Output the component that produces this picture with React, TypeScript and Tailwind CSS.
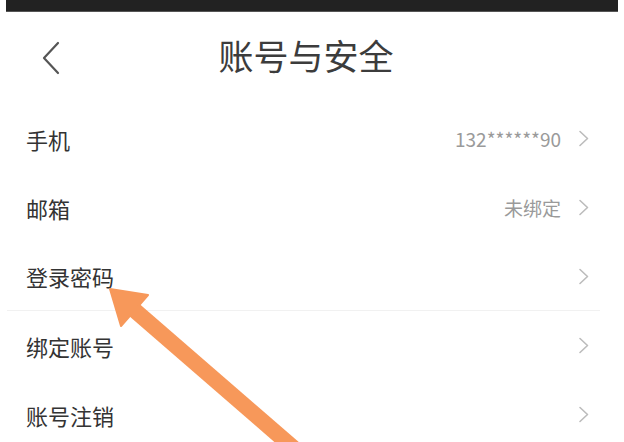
import React from 'react';

const rows: { label: string; value?: string; divider?: boolean }[] = [
  { label: '手机', value: '132******90' },
  { label: '邮箱', value: '未绑定' },
  { label: '登录密码', divider: true },
  { label: '绑定账号' },
  { label: '账号注销' },
];

const font = { fontFamily: '"Noto Sans CJK SC", "Noto Sans", sans-serif' };

function ChevronRight() {
  return (
    <svg width="12" height="17" viewBox="0 0 12 17" fill="none">
      <path d="M2 1.5 L9.5 8.5 L2 15.5" stroke="#bcbcbc" strokeWidth="1.6" strokeLinecap="round" strokeLinejoin="round" />
    </svg>
  );
}

export default function App() {
  return (
    <div className="relative w-[624px] h-[442px] overflow-hidden bg-white" style={font}>
      {/* status bar */}
      <div className="mx-[6px] h-[12px] bg-[#222222] border-b border-[#555]" />

      {/* header */}
      <div className="relative flex items-center justify-center h-[92px] pb-[2px]">
        <svg className="absolute left-[40px] top-[29px]" width="22" height="34" viewBox="0 0 22 34" fill="none">
          <path d="M18 2 L4 17 L18 32" stroke="#555" strokeWidth="2.2" strokeLinecap="round" strokeLinejoin="round" />
        </svg>
        <h1 className="text-[35px] leading-none text-[#3c3c3c] -ml-[12px] -mt-[6px]">账号与安全</h1>
      </div>

      {/* list */}
      <div className="flex flex-col">
        {rows.map((r) => (
          <div
            key={r.label}
            className={`flex items-center h-[69px] ml-[7px] mr-[24px] pl-[19px] pr-[10px] ${r.divider ? 'border-b border-[#f1f1f1]' : ''}`}
          >
            <span className="text-[22px] text-[#333] leading-none">{r.label}</span>
            <div className="ml-auto flex items-center gap-[17px]">
              {r.value && <span className="text-[19px] text-[#9a9a9a] leading-none">{r.value}</span>}
              <ChevronRight />
            </div>
          </div>
        ))}
      </div>

      {/* annotation arrow */}
      <svg className="absolute inset-0 pointer-events-none" width="624" height="442" viewBox="0 0 624 442">
        <line x1="132" y1="308" x2="305" y2="458" stroke="#f7985a" strokeWidth="16" />
        <polygon points="110,289 148,295 121,326" fill="#f7985a" stroke="#f7985a" strokeWidth="2" strokeLinejoin="round" />
      </svg>
    </div>
  );
}
